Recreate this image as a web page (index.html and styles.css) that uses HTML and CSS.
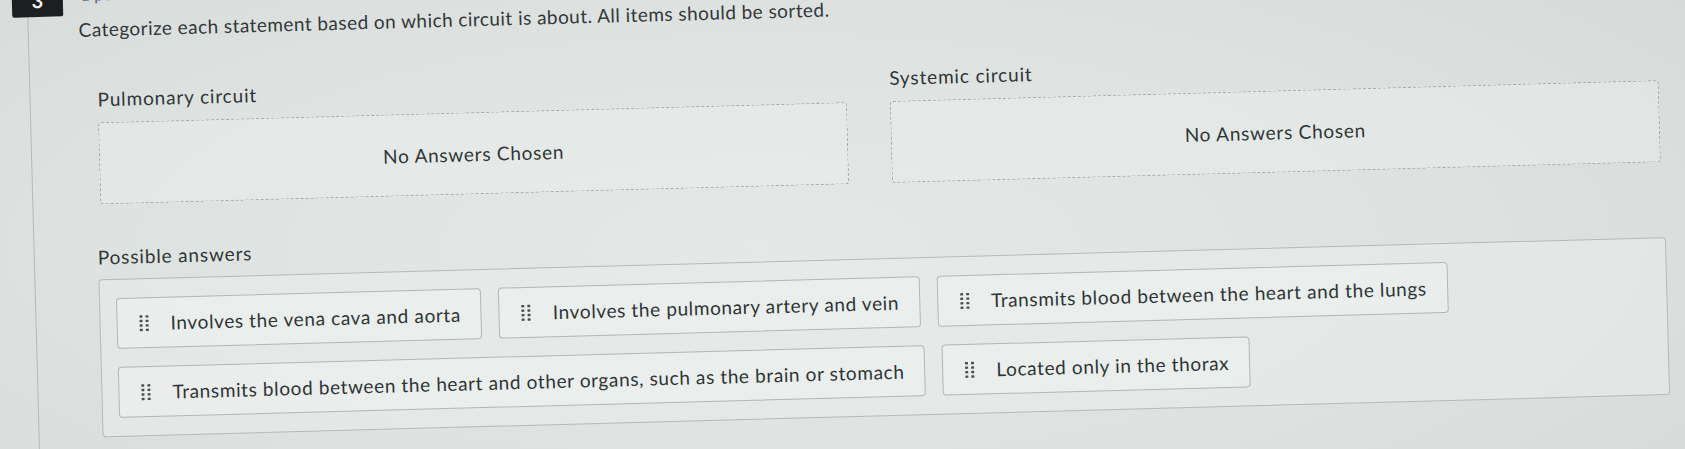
FILE: index.html
```html
<!DOCTYPE html>
<html lang="en">
<head>
<meta charset="utf-8">
<title>Categorization question</title>
<link rel="stylesheet" href="styles.css">
</head>
<body>
<div class="page">
  <div class="card">
    <header class="q-head">
      <div class="q-num">3</div>
      <div class="q-points">1 point</div>
    </header>
    <p class="prompt">Categorize each statement based on which circuit is about. All items should be sorted.</p>

    <div class="categories">
      <section class="category">
        <h3 class="cat-label">Pulmonary circuit</h3>
        <div class="dropzone">No Answers Chosen</div>
      </section>
      <section class="category">
        <h3 class="cat-label">Systemic circuit</h3>
        <div class="dropzone">No Answers Chosen</div>
      </section>
    </div>

    <section class="answers">
      <h3 class="cat-label pool-label">Possible answers</h3>
      <div class="answer-pool">
        <div class="chip">
          <svg class="grip" viewBox="0 0 11 18" width="11" height="18" aria-hidden="true"><g fill="#4b5152"><rect x="1" y="1" width="3" height="2.4" rx=".6"/><rect x="7" y="1" width="3" height="2.4" rx=".6"/><rect x="1" y="5.5" width="3" height="2.4" rx=".6"/><rect x="7" y="5.5" width="3" height="2.4" rx=".6"/><rect x="1" y="10" width="3" height="2.4" rx=".6"/><rect x="7" y="10" width="3" height="2.4" rx=".6"/><rect x="1" y="14.5" width="3" height="2.4" rx=".6"/><rect x="7" y="14.5" width="3" height="2.4" rx=".6"/></g></svg>
          <span>Involves the vena cava and aorta</span>
        </div>
        <div class="chip">
          <svg class="grip" viewBox="0 0 11 18" width="11" height="18" aria-hidden="true"><g fill="#4b5152"><rect x="1" y="1" width="3" height="2.4" rx=".6"/><rect x="7" y="1" width="3" height="2.4" rx=".6"/><rect x="1" y="5.5" width="3" height="2.4" rx=".6"/><rect x="7" y="5.5" width="3" height="2.4" rx=".6"/><rect x="1" y="10" width="3" height="2.4" rx=".6"/><rect x="7" y="10" width="3" height="2.4" rx=".6"/><rect x="1" y="14.5" width="3" height="2.4" rx=".6"/><rect x="7" y="14.5" width="3" height="2.4" rx=".6"/></g></svg>
          <span>Involves the pulmonary artery and vein</span>
        </div>
        <div class="chip">
          <svg class="grip" viewBox="0 0 11 18" width="11" height="18" aria-hidden="true"><g fill="#4b5152"><rect x="1" y="1" width="3" height="2.4" rx=".6"/><rect x="7" y="1" width="3" height="2.4" rx=".6"/><rect x="1" y="5.5" width="3" height="2.4" rx=".6"/><rect x="7" y="5.5" width="3" height="2.4" rx=".6"/><rect x="1" y="10" width="3" height="2.4" rx=".6"/><rect x="7" y="10" width="3" height="2.4" rx=".6"/><rect x="1" y="14.5" width="3" height="2.4" rx=".6"/><rect x="7" y="14.5" width="3" height="2.4" rx=".6"/></g></svg>
          <span>Transmits blood between the heart and the lungs</span>
        </div>
        <div class="chip">
          <svg class="grip" viewBox="0 0 11 18" width="11" height="18" aria-hidden="true"><g fill="#4b5152"><rect x="1" y="1" width="3" height="2.4" rx=".6"/><rect x="7" y="1" width="3" height="2.4" rx=".6"/><rect x="1" y="5.5" width="3" height="2.4" rx=".6"/><rect x="7" y="5.5" width="3" height="2.4" rx=".6"/><rect x="1" y="10" width="3" height="2.4" rx=".6"/><rect x="7" y="10" width="3" height="2.4" rx=".6"/><rect x="1" y="14.5" width="3" height="2.4" rx=".6"/><rect x="7" y="14.5" width="3" height="2.4" rx=".6"/></g></svg>
          <span>Transmits blood between the heart and other organs, such as the brain or stomach</span>
        </div>
        <div class="chip">
          <svg class="grip" viewBox="0 0 11 18" width="11" height="18" aria-hidden="true"><g fill="#4b5152"><rect x="1" y="1" width="3" height="2.4" rx=".6"/><rect x="7" y="1" width="3" height="2.4" rx=".6"/><rect x="1" y="5.5" width="3" height="2.4" rx=".6"/><rect x="7" y="5.5" width="3" height="2.4" rx=".6"/><rect x="1" y="10" width="3" height="2.4" rx=".6"/><rect x="7" y="10" width="3" height="2.4" rx=".6"/><rect x="1" y="14.5" width="3" height="2.4" rx=".6"/><rect x="7" y="14.5" width="3" height="2.4" rx=".6"/></g></svg>
          <span>Located only in the thorax</span>
        </div>
      </div>
    </section>
  </div>
</div>
</body>
</html>
```

FILE: styles.css
```css
html {
  height: 100%;
  overflow: hidden;
  background: radial-gradient(ellipse 70% 90% at 45% 55%, #e4e8e7 0%, #dde2e1 60%, #d6dbda 100%);
}

body {
  margin: 0;
  height: 100%;
  overflow: hidden;
  font-family: Lato, "Open Sans", "Liberation Sans", sans-serif;
  color: #2f3536;
}

.page {
  width: 1760px;
  min-height: 560px;
  margin-top: -30px;
  padding-left: 26px;
  transform: rotate(-1.55deg);
  transform-origin: 0 0;
}

.card {
  min-height: 560px;
  padding-left: 50px;
  border-left: 1px solid #b4baba;
}

.q-head {
  display: flex;
  height: 48px;
  margin-left: -66px;
}

.q-num {
  box-sizing: border-box;
  width: 51px;
  height: 48px;
  padding-top: 14px;
  display: flex;
  align-items: center;
  justify-content: center;
  background: #1c1e1f;
  color: #f4f4f4;
  font-size: 20px;
  font-weight: 700;
  border-radius: 2px;
}

.q-points {
  margin-left: 18px;
  margin-top: 17px;
  font-size: 16px;
  line-height: 20px;
  color: #565c5d;
}

.prompt {
  margin: 0;
  font-size: 19px;
  line-height: 27px;
  letter-spacing: 0.45px;
  color: #333839;
}

.categories {
  display: grid;
  grid-template-columns: 749px 1fr;
  column-gap: 43px;
  width: 1561px;
  margin: 43px 0 0 17px;
}

.cat-label {
  margin: 0 0 10px;
  font-size: 19px;
  line-height: 27px;
  letter-spacing: 0.85px;
  font-weight: 400;
  color: #303637;
}

.dropzone {
  box-sizing: border-box;
  height: 82px;
  display: flex;
  align-items: center;
  justify-content: center;
  border: 1px dashed #a4aaaa;
  border-radius: 3px;
  background: rgba(236, 239, 238, 0.45);
  font-size: 19px;
  letter-spacing: 0.75px;
  color: #303637;
}

.answers {
  margin: 39px 0 0 13px;
}

.pool-label {
  margin-bottom: 9px;
}

.answer-pool {
  box-sizing: border-box;
  width: 1568px;
  padding: 18px 16px;
  display: flex;
  flex-wrap: wrap;
  align-items: flex-start;
  gap: 18px 17px;
  border: 1px solid #b4baba;
  border-radius: 4px;
  background: rgba(232, 236, 235, 0.6);
}

.chip {
  display: flex;
  align-items: center;
  gap: 21px;
  padding: 11px 20px 11px 21px;
  border: 1px solid #b1b7b7;
  border-radius: 4px;
  background: rgba(236, 239, 238, 0.7);
  font-size: 19px;
  line-height: 27px;
  letter-spacing: 0.62px;
  color: #2f3536;
  white-space: nowrap;
}

.grip {
  flex: none;
  display: block;
}
```
